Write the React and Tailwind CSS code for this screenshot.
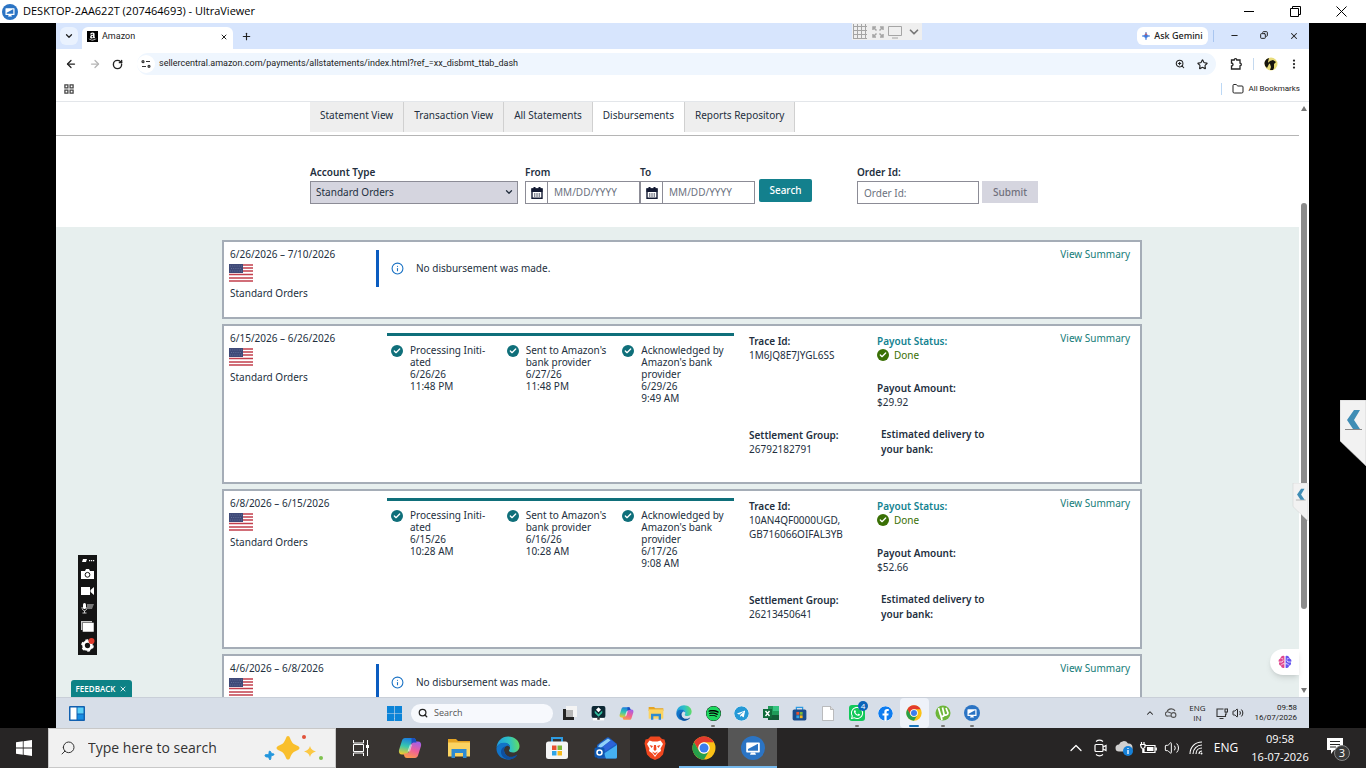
import { useState } from 'react'
import {
  ArrowLeft,
  ArrowRight,
  Check,
  ChevronDown,
  ChevronUp,
  Copy,
  EllipsisVertical,
  Folder,
  Info,
  Minus,
  Plus,
  RotateCw,
  Search,
  Star,
  Volume2,
  X,
  ZoomIn,
} from 'lucide-react'
import { FaAmazon, FaFacebook, FaSpotify, FaTelegram, FaWhatsapp } from 'react-icons/fa'

const tabs = ['Statement View', 'Transaction View', 'All Statements', 'Disbursements', 'Reports Repository']

const disbursements = [
  { period: '6/26/2026 – 7/10/2026', accountType: 'Standard Orders', steps: null },
  {
    period: '6/15/2026 – 6/26/2026',
    accountType: 'Standard Orders',
    steps: [
      { title: ['Processing Initi-', 'ated'], date: '6/26/26', time: '11:48 PM' },
      { title: ["Sent to Amazon's", 'bank provider'], date: '6/27/26', time: '11:48 PM' },
      { title: ['Acknowledged by', "Amazon's bank", 'provider'], date: '6/29/26', time: '9:49 AM' },
    ],
    traceIds: '1M6JQ8E7JYGL6SS',
    settlementGroup: '26792182791',
    amount: '$29.92',
  },
  {
    period: '6/8/2026 – 6/15/2026',
    accountType: 'Standard Orders',
    steps: [
      { title: ['Processing Initi-', 'ated'], date: '6/15/26', time: '10:28 AM' },
      { title: ["Sent to Amazon's", 'bank provider'], date: '6/16/26', time: '10:28 AM' },
      { title: ['Acknowledged by', "Amazon's bank", 'provider'], date: '6/17/26', time: '9:08 AM' },
    ],
    traceIds: '10AN4QF0000UGD, GB716066OIFAL3YB',
    settlementGroup: '26213450641',
    amount: '$52.66',
  },
  { period: '4/6/2026 – 6/8/2026', steps: null },
]

/* ---------- logos ---------- */

function ViewerLogo({ className }) {
  return (
    <svg viewBox="0 0 24 24" className={className} aria-hidden="true">
      <circle cx="12" cy="12" r="12" fill="#2b74c4" />
      <path d="M6 6.500h12a.8.8 0 0 1 .8.8v8.400a.8.8 0 0 1-.8.8H6a.8.8 0 0 1-.8-.8V7.300a.8.8 0 0 1 .8-.8z" fill="#fff" />
      <path d="M7 14.800V13l9.500-5H17v6.800z" fill="#2b74c4" />
      <path d="M10 16.500h4l1 2.200H9z" fill="#fff" />
    </svg>
  )
}

function ChromeLogo({ className }) {
  return (
    <svg viewBox="0 0 48 48" className={className} aria-hidden="true">
      <circle cx="24" cy="24" r="23" fill="#fbc116" />
      <path d="M4.080 12.500A23 23 0 0 1 43.920 12.500H24a11.500 11.500 0 0 0-9.960 17.250z" fill="#e33b2e" />
      <path d="M4.080 12.500A23 23 0 0 0 24 47l9.960-17.250a11.500 11.500 0 0 1-19.920 0z" fill="#269f4b" />
      <circle cx="24" cy="24" r="11.500" fill="#fff" />
      <circle cx="24" cy="24" r="9" fill="#3b7ded" />
    </svg>
  )
}

function EdgeLogo({ className, id }) {
  return (
    <svg viewBox="0 0 48 48" className={className} aria-hidden="true">
      <defs>
        <linearGradient id={id} x1="0" y1="0.300" x2="1" y2="0.200">
          <stop offset="0" stopColor="#1f9ee0" />
          <stop offset="0.550" stopColor="#2fc2c4" />
          <stop offset="1" stopColor="#66e05a" />
        </linearGradient>
      </defs>
      <path d="M1 24C2 10 12 1 24 1c14 0 23 9 23 19 0 8-6 13-13 13-5 0-8-2-8-4 0-1 2-2 2-6 0-5-5-9-11-9C9 14 3 18 1 24z" fill={`url(#${id})`} />
      <path d="M1 24C3 17 9 13.500 16 13.500c7 0 12 4 12 9.500-2-3-5-4-7-3-5 2-6 8-4 13 3 8 11 12 20 9-4 4-9 5-13 5C11 47 0 37 1 24z" fill="#1173c8" />
      <path d="M21 20c-5 2-6 8-4 13 3 8 13 12 24 5 1-1 2 0 1 1-4 6-11 8-17 8-9-1-15-8-15-15 0-7 5-11 11-12z" fill="#0f4f9e" />
    </svg>
  )
}

function CopilotLogo({ className, id }) {
  return (
    <svg viewBox="0 0 48 48" className={className} aria-hidden="true">
      <defs>
        <linearGradient id={`${id}a`} x1="0.500" y1="0" x2="0.300" y2="1">
          <stop offset="0" stopColor="#1b7de0" />
          <stop offset="0.500" stopColor="#37c7ae" />
          <stop offset="1" stopColor="#f3cb2d" />
        </linearGradient>
        <linearGradient id={`${id}b`} x1="0.700" y1="0" x2="0.300" y2="1">
          <stop offset="0" stopColor="#a260e8" />
          <stop offset="0.500" stopColor="#ee5f9a" />
          <stop offset="1" stopColor="#fb9a4b" />
        </linearGradient>
      </defs>
      <path d="M14 4h17c3 0 4 2 5 5l1 4h-5c-4 0-6 2-7 6l-4 14c-1 3-3 4-6 4H8c-5 0-7-4-6-9L8 9c1-3 3-5 6-5z" fill={`url(#${id}a)`} />
      <path d="M34 44H18c-4 0-5-2-6-6l-1-3h5c4 0 6-2 7-6l4-14c1-3 3-4 6-4h7c5 0 7 4 6 9l-6 19c-1 3-3 5-6 5z" fill={`url(#${id}b)`} />
      <path d="M24 17h4l-4 14h-5z" fill="#fff" opacity="0.600" />
      <path d="M27 4h4c3 0 4 2 5 5l1 4h-5c-2 0-4 1-5 3z" fill="#1c4fc0" />
    </svg>
  )
}

function FolderLogo({ className }) {
  return (
    <svg viewBox="0 0 48 48" className={className} aria-hidden="true">
      <path d="M2 6h16l4 4h24v8H2z" fill="#e5a423" />
      <path d="M2 13h44v28H2z" fill="#fcd462" />
      <path d="M9 26h30v18h-7V34H16v10H9z" fill="#2e8bd2" />
    </svg>
  )
}

function StoreLogo({ className, dark }) {
  return (
    <svg viewBox="0 0 48 48" className={className} aria-hidden="true">
      <path d="M14 13V4h20v9" fill="none" stroke="#2d9be2" strokeWidth="4" />
      <rect x="2" y="11" width="44" height="35" rx="5" fill={dark ? '#1a4c8c' : '#f5f5f5'} />
      <path d="M14 19h9v9h-9z" fill="#e85130" />
      <path d="M25 19h9v9h-9z" fill="#7db93a" />
      <path d="M14 30h9v9h-9z" fill="#2fa4e7" />
      <path d="M25 30h9v9h-9z" fill="#f8b91c" />
    </svg>
  )
}

function OutlookLogo({ className }) {
  return (
    <svg viewBox="0 0 48 48" className={className} aria-hidden="true">
      <path d="M6 18 26 3q2-1 4 0l16 13v26a3 3 0 0 1-3 3H9a3 3 0 0 1-3-3z" fill="#1b5fc4" />
      <path d="M12 16 28 5l6 4-20 15-6-3z" fill="#8fd0f8" />
      <path d="m34 8 10 8-22 15-8-7z" fill="#2d63d8" />
      <path d="m46 18-26 17 4 10h19a3 3 0 0 0 3-3z" fill="#45b0f2" />
      <rect x="1" y="23" width="20" height="20" rx="3" fill="#0d57b0" />
      <circle cx="11" cy="33" r="5" fill="none" stroke="#fff" strokeWidth="3" />
    </svg>
  )
}

function BraveLogo({ className }) {
  return (
    <svg viewBox="0 0 48 48" className={className} aria-hidden="true">
      <path d="M15 1h18l5 5 5 1 2 8-5 22-7 7-9 4-9-4-7-7L3 15l2-8 5-1z" fill="#f0471f" />
      <path d="m13 9 6 2h10l6-2 5 7-5 9 1 5-7 5-5 7-5-7-7-5 1-5-5-9z" fill="#fff" />
      <path d="m13 18 7 2-3 4zM35 18l-7 2 3 4zM22 18h4l1 9-3 3-3-3zM18 31l6 3 6-3-6 8z" fill="#f0471f" />
    </svg>
  )
}

function WindowsLogo({ className }) {
  return (
    <svg viewBox="0 0 16 16" className={className} aria-hidden="true">
      <path d="M0 2.300 6.800 1.300v6.300H0zM7.600 1.200 16 0v7.600H7.600zM0 8.400h6.800v6.300L0 13.700zM7.600 8.400H16V16l-8.400-1.200z" fill="#fff" />
    </svg>
  )
}

function ClapLogo({ className }) {
  return (
    <svg viewBox="0 0 24 24" className={className} aria-hidden="true">
      <rect x="1" y="0" width="22" height="19" rx="3" fill="#0c2733" />
      <path d="m12 2 4 4-4 4-4-4z" fill="#fff" />
      <path d="m6 7 6 6 6-6v4l-6 6-6-6z" fill="#2fbf9f" />
      <path d="M3 19h18v4H3z" fill="#fff" />
      <path d="M10 19h4v3h-4z" fill="#333" />
    </svg>
  )
}

function SparkleArt({ className }) {
  return (
    <svg viewBox="0 0 64 28" className={className} aria-hidden="true">
      <path d="M24 2q1.500 0 2 2c2 5 3 6 8 8 2 1 2 3 0 4-5 2-6 3-8 8-1 2-3 2-4 0-2-5-3-6-8-8-2-1-2-3 0-4 5-2 6-3 8-8q.500-2 2-2z" fill="#f9bf2c" />
      <path d="M46 12c1 3 2 4 6 5.500-4 1.500-5 2.500-6 5.500-1-3-2-4-6-5.500 4-1.500 5-2.500 6-5.500z" fill="#fbc844" />
      <path d="M6 17c1 2 2 3 4 3 0 2-2 1-3 2 0 2 0 3-1 4-1-1-1-3-2-3-2 0-3 0-3-2 2-1 3 0 4-1 0-2 0-3 1-3z" fill="#2296dd" stroke="#2296dd" />
      <circle cx="40" cy="3" r="2" fill="#e1523a" />
      <circle cx="57" cy="24" r="2" fill="#7fc24f" />
    </svg>
  )
}

function BrainLogo({ className }) {
  return (
    <svg viewBox="0 0 24 24" className={className} aria-hidden="true">
      <path d="M11 2v20c-3 1-5 0-6-3-3-1-4-4-3-6-2-3-1-6 2-7 1-4 4-6 7-4z" fill="#e0468e" />
      <path d="M13 2v20c3 1 5 0 6-3 3-1 4-4 3-6 2-3 1-6-2-7-1-4-4-6-7-4z" fill="#6554f0" />
      <path d="M2 12h5l2-3M5 18l3-3h3M6 6l3 1M22 12h-5l-2-3M19 18l-3-3h-3M18 6l-3 1" fill="none" stroke="#fff" strokeWidth="1.300" />
    </svg>
  )
}

function UsFlag() {
  return (
    <svg viewBox="0 0 24 18" className="h-[18px] w-6" role="img" aria-label="United States">
      <path d="M0 0h24v18H0z" fill="#fff" />
      <path d="M0 1h24M0 4h24M0 7h24M0 10.500h24M0 14h24M0 17h24" stroke="#c23f4c" strokeWidth="1.700" />
      <path d="M0 0h14v9H0z" fill="#3f4a78" />
      <path d="M1 2h12M2 4.500h11M1 7h12" stroke="#6c779f" strokeWidth="0.800" strokeDasharray="1 1.200" />
    </svg>
  )
}

function CalendarIcon() {
  return (
    <svg viewBox="0 0 12 12" className="size-3" aria-hidden="true">
      <path d="M1 2h10v9.300H1z" fill="none" stroke="#131a33" strokeWidth="1.400" />
      <path d="M.500 1.500h11V5H.500zM2.500 0h2v2h-2zM7.500 0h2v2h-2z" fill="#131a33" />
      <path d="M3 7h6M3 9h6" stroke="#131a33" strokeWidth="1.200" strokeDasharray="1.400 0.900" />
    </svg>
  )
}

function CheckBadge({ color }) {
  return (
    <span className={`flex size-3 shrink-0 items-center justify-center rounded-full ${color}`}>
      <Check className="size-2 text-white" strokeWidth={4} />
    </span>
  )
}

/* ---------- outer window ---------- */

function TitleBar() {
  return (
    <header className="flex h-[23px] shrink-0 items-center bg-white text-black">
      <ViewerLogo className="ml-[2px] size-4" />
      <h1 className="ml-[5px] font-['Open_Sans','Noto_Sans',sans-serif] text-[11px]">DESKTOP-2AA622T (207464693) - UltraViewer</h1>
      <div className="ml-auto flex pr-[2px]">
        <button type="button" aria-label="Minimize" className="flex w-[46px] items-center justify-center">
          <span className="h-px w-[10px] bg-black" />
        </button>
        <button type="button" aria-label="Restore" className="flex w-[46px] items-center justify-center">
          <svg viewBox="0 0 11 11" className="size-[11px]" fill="none" stroke="currentColor">
            <path d="M.500 2.500h8v8h-8zM2.500 2.500v-2h8v8h-2" />
          </svg>
        </button>
        <button type="button" aria-label="Close" className="flex w-[46px] items-center justify-center">
          <svg viewBox="0 0 11 11" className="size-[11px]" fill="none" stroke="currentColor">
            <path d="m.500.500 10 10m0-10-10 10" />
          </svg>
        </button>
      </div>
    </header>
  )
}

function SideHandle({ className, shape }) {
  return (
    <button type="button" aria-label="Open panel" className={className}>
      <svg viewBox="0 0 26 66" className={shape}>
        <path d="M0 0h26v66L0 41z" fill="#f2f2f2" stroke="#bbb" strokeWidth="0.500" />
        <path d="M5 29.500h17" stroke="#888" />
        <path d="M20 10h-6L7 20l6 9h7l-6-9z" fill="#3f8db5" />
      </svg>
    </button>
  )
}

function HostTaskbar() {
  const item = 'flex w-[49px] items-center justify-center'

  return (
    <footer className="flex h-10 shrink-0 bg-[#272525] font-['Open_Sans','Noto_Sans',sans-serif] text-white">
      <button type="button" aria-label="Start" className="flex w-12 items-center justify-center">
        <WindowsLogo className="size-4" />
      </button>
      <label className="flex w-72 items-center border border-[#c8c8c8] bg-[#f1f1f1] pl-[11px] text-[#333]">
        <Search className="size-4 -scale-x-100" strokeWidth={1.5} />
        <input
          type="text"
          aria-label="Type here to search"
          placeholder="Type here to search"
          className="ml-3 w-[176px] bg-transparent text-sm outline-none placeholder:text-[#333]"
        />
        <SparkleArt className="h-7 w-16" />
      </label>
      <div className="flex bg-[#383432]">
        <button type="button" aria-label="Task View" className={item}>
          <svg viewBox="0 0 18 18" className="size-[18px]" fill="none" stroke="currentColor">
            <path d="M1.500 1v3h10V1M1.500 17v-3h10v3M1.500 5.500h10v7h-10zM15.500 1v16" />
            <path d="M14 6h3v3h-3z" fill="currentColor" stroke="none" />
          </svg>
        </button>
        <button type="button" aria-label="Copilot" className={item}><CopilotLogo id="hostCopilot" className="size-6" /></button>
        <button type="button" aria-label="File Explorer" className={item}><FolderLogo className="size-6" /></button>
        <button type="button" aria-label="Edge" className={item}><EdgeLogo id="hostEdge" className="size-6" /></button>
        <button type="button" aria-label="Store" className={item}><StoreLogo className="size-6" /></button>
        <button type="button" aria-label="Outlook" className={item}><OutlookLogo className="size-6" /></button>
      </div>
      <button type="button" aria-label="Brave" className={item}><BraveLogo className="size-6" /></button>
      <button type="button" aria-label="Chrome" className={`${item} border-b-2 border-[#76b9ed] pt-[2px]`}><ChromeLogo className="size-6" /></button>
      <button type="button" aria-label="UltraViewer" className={`${item} border-b-2 border-[#76b9ed] bg-[#565656] pt-[2px]`}><ViewerLogo className="size-6" /></button>

      <div className="ml-auto flex items-center">
        <div className="flex items-center">
          <span className="flex w-6 justify-center"><ChevronUp className="size-5" strokeWidth={1.5} /></span>
          <span className="flex w-6 justify-center">
            <svg viewBox="0 0 16 18" className="h-[18px] w-4" fill="none" stroke="currentColor" strokeWidth="1.200">
              <rect x="3" y="5.500" width="8" height="7" rx="1" />
              <path d="m11 8 3-1.500v5L11 10M4 2.500c2-1.500 5-1.500 7 0M4 15.500c2 1.500 5 1.500 7 0" />
            </svg>
          </span>
          <span className="flex w-6 justify-center">
            <svg viewBox="0 0 18 16" className="h-4 w-[18px]">
              <path d="M4 11.500a3.500 3.500 0 0 1 0-7 5 5 0 0 1 9-1 4 4 0 0 1 1 8z" fill="#d0d0d0" />
              <circle cx="13" cy="11" r="5" fill="#1681d8" />
              <path d="M13 10v4M13 8v1" stroke="#fff" strokeWidth="1.300" />
            </svg>
          </span>
          <span className="flex w-6 justify-center">
            <svg viewBox="0 0 17 12" className="h-3 w-[17px]" fill="none" stroke="currentColor" strokeWidth="1.200">
              <path d="M5.500 3.500H15v7H4V7M16.300 5.500v3M1.500 0v2.500M4 0v2.500M.500 2.500H5V4.500a2 2 0 0 1-4 0zM2.800 7v4" />
              <path d="M7 5h6.500v4H7z" fill="currentColor" stroke="none" />
            </svg>
          </span>
          <span className="flex w-6 justify-center"><Volume2 className="size-4" strokeWidth={1.5} /></span>
          <span className="flex w-6 justify-center">
            <svg viewBox="0 0 14 14" className="size-[14px]" fill="none" stroke="currentColor" strokeWidth="1.100">
              <path d="M1 13C1 6 6 1 13 1M4 13c0-5 4-9 9-9M7 13c0-4 3-6 6-6M10 13c0-2 1-3 3-3" />
              <circle cx="12.500" cy="12.500" r="1" fill="currentColor" stroke="none" />
            </svg>
          </span>
        </div>
        <span className="ml-1 w-7 text-center text-xs">ENG</span>
        <div className="ml-2 w-[64px] text-center text-[11px] leading-[18px] whitespace-nowrap">
          <p>09:58</p>
          <p>16-07-2026</p>
        </div>
        <button type="button" aria-label="3 notifications" className="mr-4 ml-[14px] flex w-6 justify-center">
          <svg viewBox="0 0 24 26" className="h-[26px] w-6">
            <path d="M1 3h16v12H8l-3 4v-4H1z" fill="#fff" />
            <path d="M4 6.500h10M4 9.500h10M4 12h6" stroke="#272525" />
            <circle cx="16" cy="18" r="7.500" fill="#3a3a3a" stroke="#888" />
            <text x="16" y="22" textAnchor="middle" fontSize="11" fill="#fff">3</text>
          </svg>
        </button>
      </div>
    </footer>
  )
}

/* ---------- browser on the remote desktop ---------- */

function BrowserChrome() {
  return (
    <div className="shrink-0 font-['Open_Sans','Noto_Sans',sans-serif] text-[#222]">
      <div className="flex h-[26px] items-center bg-[#d7e5fd]">
        <button type="button" aria-label="Search tabs" className="ml-1 flex size-[18px] items-center justify-center rounded-md bg-[#eaf2fe]">
          <ChevronDown className="size-[10px]" strokeWidth={3} />
        </button>
        <div className="ml-1 flex h-[22px] w-[151px] items-center self-end rounded-t-md bg-white px-[5px] pb-[3px] text-[9px]">
          <span className="flex size-[11px] items-center justify-center bg-black text-white"><FaAmazon className="size-[9px]" /></span>
          <span className="ml-1 font-['Roboto',sans-serif]">Amazon</span>
          <button type="button" aria-label="Close tab" className="ml-auto"><X className="size-2" strokeWidth={3} /></button>
        </div>
        <button type="button" aria-label="New tab" className="ml-2"><Plus className="size-[11px]" strokeWidth={2.5} /></button>
        <div className="ml-auto flex items-center">
          <button type="button" className="flex h-[18px] w-[71px] items-center justify-center gap-1 rounded-md bg-white font-['Noto_Sans',sans-serif] text-[9px] font-medium">
            <svg viewBox="0 0 10 10" className="size-2">
              <path d="M5 0c.500 3.500 1.500 4.500 5 5-3.500.500-4.500 1.500-5 5C4.500 6.500 3.500 5.500 0 5c3.500-.500 4.500-1.500 5-5z" fill="#3c78dc" stroke="#3c78dc" strokeWidth="0.600" />
              <path d="M5 0c.300 2 .700 3 1.500 3.800L3.500 4C4.300 3.300 4.700 2 5 0z" fill="#e2504a" />
            </svg>
            Ask Gemini
          </button>
          <span className="ml-[5px] h-3 w-px bg-[#a9c6f0]" />
          <div className="flex pl-[5px]">
            <button type="button" aria-label="Minimize" className="flex w-[30px] justify-center"><Minus className="size-[9px]" strokeWidth={3} /></button>
            <button type="button" aria-label="Restore" className="flex w-[30px] justify-center"><Copy className="size-2 -scale-x-100" strokeWidth={3} /></button>
            <button type="button" aria-label="Close" className="flex w-[30px] justify-center"><X className="size-[10px]" strokeWidth={2.5} /></button>
          </div>
        </div>
      </div>

      <div className="flex h-[30px] items-center bg-white">
        <button type="button" aria-label="Back" className="ml-[9px]"><ArrowLeft className="size-3" strokeWidth={2.5} /></button>
        <button type="button" aria-label="Forward" className="ml-3 text-[#b5b5b5]"><ArrowRight className="size-3" strokeWidth={2.5} /></button>
        <button type="button" aria-label="Reload" className="ml-[11px]"><RotateCw className="size-[11px]" strokeWidth={3} /></button>
        <div className="ml-[14px] flex h-[22px] flex-1 items-center rounded-full bg-[#eff6fe] pr-2">
          <span className="flex size-[18px] items-center justify-center rounded-full bg-white">
            <svg viewBox="0 0 10 8" className="h-2 w-[10px]" fill="none" stroke="#333" strokeWidth="1.200">
              <path d="M5 1.500h4M1 6.500h4" />
              <circle cx="2" cy="1.700" r="1" />
              <circle cx="8" cy="6.300" r="1" />
            </svg>
          </span>
          <input
            type="text"
            aria-label="Address"
            defaultValue="sellercentral.amazon.com/payments/allstatements/index.html?ref_=xx_disbmt_ttab_dash"
            className="ml-1 min-w-0 flex-1 bg-transparent font-['Roboto',sans-serif] text-[9px] outline-none"
          />
          <ZoomIn className="size-[10px]" strokeWidth={2.5} />
          <Star className="ml-3 size-[11px]" strokeWidth={2.5} />
        </div>
        <button type="button" aria-label="Extensions" className="ml-[14px]">
          <svg viewBox="0 0 12 12" className="size-3" fill="none" stroke="currentColor" strokeWidth="1.300">
            <path d="M1.500 2h2.700a1.300 1.300 0 0 1 2.600 0H10v3.200a1.300 1.300 0 0 1 0 2.600V11H1.500V8a1.500 1.500 0 0 0 0-3z" />
          </svg>
        </button>
        <span className="ml-[11px] h-3 w-px bg-[#c4d9ef]" />
        <svg viewBox="0 0 14 14" className="ml-[10px] size-[14px]" role="img" aria-label="Profile">
          <circle cx="7" cy="7" r="6.500" fill="#e8dc7a" />
          <path d="M1 4a6 6 0 0 1 4-3L4 5l1 2-2 4a6 6 0 0 1-2-7zM6 4l3-1 3 2-2 2v4l-1 2H6l1-3-1-3-2-1z" fill="#16140d" />
        </svg>
        <button type="button" aria-label="Menu" className="mr-[9px] ml-[10px]"><EllipsisVertical className="size-3" strokeWidth={2.5} /></button>
      </div>

      <div className="flex h-[23px] items-center border-b border-[#e3e6ea] bg-white pb-[3px]">
        <svg viewBox="0 0 11 11" className="ml-2 size-[10px]" fill="none" stroke="#444" strokeWidth="1.400">
          <path d="M1 1h3.300v3.300H1zM6.700 1H10v3.300H6.700zM1 6.700h3.300V10H1zM6.700 6.700H10V10H6.700z" />
        </svg>
        <span className="ml-auto h-3 w-px bg-[#bcd8f5]" />
        <button type="button" className="mr-[9px] ml-[10px] flex items-center gap-1 font-['Roboto',sans-serif] text-[8px]">
          <Folder className="size-3" strokeWidth={2} />
          All Bookmarks
        </button>
      </div>
    </div>
  )
}

function DateField({ label }) {
  return (
    <div className="w-[115px]">
      <label htmlFor={label} className="block font-semibold leading-[18px]">{label}</label>
      <div className="flex h-[23px] border border-[#8c8c96] bg-white">
        <button type="button" aria-label={`${label} calendar`} className="flex w-[22px] items-center justify-center border-r border-[#8c8c96]">
          <CalendarIcon />
        </button>
        <input id={label} type="text" placeholder="MM/DD/YYYY" className="w-[90px] px-[6px] outline-none placeholder:text-[#6b7280]" />
      </div>
    </div>
  )
}

function Filters() {
  return (
    <form className="flex items-start pt-[27px] pb-[23px]" onSubmit={(event) => event.preventDefault()}>
      <div className="w-52">
        <label htmlFor="accountType" className="block font-semibold leading-[18px]">Account Type</label>
        <div className="relative">
          <select id="accountType" className="block h-[23px] w-full appearance-none border border-[#8c8c96] bg-[#d5d5df] px-[5px]">
            <option>Standard Orders</option>
          </select>
          <ChevronDown className="pointer-events-none absolute top-[6px] right-1 size-[10px]" strokeWidth={3} />
        </div>
      </div>
      <div className="ml-[7px] flex">
        <DateField label="From" />
        <DateField label="To" />
      </div>
      <button type="submit" className="mt-4 ml-1 h-[23px] w-[53px] rounded-[2px] bg-[#13808d] font-medium text-white">Search</button>
      <div className="ml-[45px] w-[122px]">
        <label htmlFor="orderId" className="block font-semibold leading-[18px]">Order Id:</label>
        <input id="orderId" type="text" placeholder="Order Id:" className="block h-[23px] w-full border border-[#8c8c96] px-[6px] outline-none placeholder:text-[#6b7280]" />
      </div>
      <button type="button" disabled className="mt-[18px] ml-[3px] h-[22px] w-14 bg-[#d5d5df] font-medium text-[#70707c]">Submit</button>
    </form>
  )
}

function Timeline({ steps }) {
  return (
    <ol className="mt-[7px] ml-[11px] flex w-[347px] self-start border-t-3 border-[#0f6f7a] pt-2 leading-[12px]">
      {steps.map((step) => (
        <li key={step.date} className="flex flex-1 pl-1">
          <CheckBadge color="mt-px bg-[#0f6f7a]" />
          <div className="ml-[7px]">
            {step.title.map((line) => (
              <p key={line}>{line}</p>
            ))}
            <p>{step.date}</p>
            <p>{step.time}</p>
          </div>
        </li>
      ))}
    </ol>
  )
}

function DisbursementCard({ item }) {
  return (
    <article className={`flex border-2 border-[#a5adb7] bg-white pl-[6px] ${item.steps ? 'min-h-[160px]' : 'min-h-[79px]'}`}>
      <div className="w-[146px] pt-1">
        <p className="leading-4">{item.period}</p>
        <div className="-ml-px pt-[2px] pb-[3px]"><UsFlag /></div>
        <p className="leading-4">{item.accountType}</p>
      </div>

      {item.steps ? (
        <>
          <Timeline steps={item.steps} />
          <dl className="ml-[15px] grid w-[128px] grid-rows-[94px_auto] content-start pt-2 leading-[14px]">
            <div>
              <dt className="font-semibold">Trace Id:</dt>
              <dd className="w-[100px]">{item.traceIds}</dd>
            </div>
            <div>
              <dt className="font-semibold">Settlement Group:</dt>
              <dd>{item.settlementGroup}</dd>
            </div>
          </dl>
          <dl className="w-[130px] pt-2 leading-[14px]">
            <dt className="font-semibold text-[#138290]">Payout Status:</dt>
            <dd className="flex items-center gap-[5px] text-[#3a7005]">
              <CheckBadge color="bg-[#3a7005]" />
              Done
            </dd>
            <dt className="pt-[19px] font-semibold">Payout Amount:</dt>
            <dd>{item.amount}</dd>
            <dt className="pt-[18px] pl-1 font-semibold leading-[15px]">Estimated delivery to<br />your bank:</dt>
          </dl>
        </>
      ) : (
        <div className="mt-2 flex h-[37px] items-center self-start border-l-3 border-[#0a5cc0] pl-3">
          <Info className="size-[13px] text-[#1a72c4]" strokeWidth={2} />
          <p className="ml-3">No disbursement was made.</p>
        </div>
      )}

      <a href="#summary" className="mt-1 mr-[10px] ml-auto self-start leading-4 text-[#147c78]">View Summary</a>
    </article>
  )
}

function RecorderWidget() {
  return (
    <div className="absolute bottom-[42px] left-[22px] flex h-[100px] w-[19px] flex-col items-center justify-between bg-[#141414] py-[3px] text-white">
      <svg viewBox="0 0 14 5" className="h-[5px] w-[14px]" fill="currentColor">
        <path d="M2 1h4L5 4H1zM8 2h1.200v1.200H8zM10 2h1.200v1.200H10zM12 2h1.200v1.200H12z" />
      </svg>
      <svg viewBox="0 0 13 10" className="h-[10px] w-[13px]">
        <path d="M0 2h4l1-2h3l1 2h4v8H0z" fill="#fff" />
        <circle cx="6.500" cy="5.800" r="2.400" fill="#fff" stroke="#141414" />
      </svg>
      <svg viewBox="0 0 13 10" className="h-[10px] w-[13px]" fill="currentColor"><path d="M0 1h9v8H0zM9.500 4 13 1v8L9.500 6z" /></svg>
      <svg viewBox="0 0 13 12" className="h-3 w-[13px]">
        <rect x="2" y="1" width="3" height="6" rx="1.500" fill="#fff" />
        <path d="M1 5c0 5 5 5 5 0M3.500 9v2M1.500 11h4" fill="none" stroke="#ccc" />
        <path d="M6 2h7l-2 5H6z" fill="#777" />
      </svg>
      <svg viewBox="0 0 13 11" className="h-[11px] w-[13px]"><path d="M0 0h11v9H0z" fill="#ccc" /><path d="M1.500 1.500H13V11H1.500z" fill="#fff" stroke="#141414" strokeWidth="0.500" /></svg>
      <svg viewBox="0 0 14 14" className="size-[14px]">
        <circle cx="6.500" cy="7.500" r="4" fill="none" stroke="#fff" strokeWidth="2.600" />
        <circle cx="6.500" cy="7.500" r="5.500" fill="none" stroke="#fff" strokeWidth="1.600" strokeDasharray="2.900 2.860" />
        <circle cx="10.500" cy="3" r="3" fill="#e03b2c" />
      </svg>
    </div>
  )
}

function RemoteTaskbar() {
  const item = 'flex flex-1 items-center justify-center'

  return (
    <div className="grid h-[31px] shrink-0 grid-cols-[1fr_auto_1fr] items-center border-t border-[#c9cfd8] bg-[#d7dee8] font-['Open_Sans','Noto_Sans',sans-serif] text-[#222]">
      <button type="button" aria-label="Widgets" className="ml-[13px] justify-self-start">
        <svg viewBox="0 0 16 15" className="h-[15px] w-4">
          <rect width="16" height="15" rx="1" fill="#1160b0" />
          <path d="M1.500 1.500h6v12h-6z" fill="#fff" />
          <path d="M8.500 1.500h6v6h-6z" fill="#5cd0f7" />
          <path d="M8.500 8.500h6v5h-6z" fill="#168de2" />
        </svg>
      </button>
      <div className="flex items-center pl-1">
        <button type="button" aria-label="Start" className="ml-1">
          <svg viewBox="0 0 15 15" className="size-[15px]" fill="#0c84d8"><path d="M0 0h7.200v7.200H0zM7.800 0H15v7.200H7.800zM0 7.800h7.200V15H0zM7.800 7.800H15V15H7.800z" /></svg>
        </button>
        <label className="ml-[9px] flex h-[19px] w-[142px] items-center rounded-full bg-[#f7f9fd] px-[7px]">
          <Search className="size-[10px]" strokeWidth={3} />
          <input type="text" aria-label="Search" placeholder="Search" className="ml-[6px] w-[100px] bg-transparent text-[9px] outline-none placeholder:text-[#555]" />
        </label>
        <div className="ml-[2px] flex h-[30px] w-[431px]">
          <button type="button" aria-label="Desktops" className={item}>
            <svg viewBox="0 0 15 15" className="size-[15px]"><path d="M4 0h11v11H4z" fill="#f4f4f4" /><path d="M4 4h7v7H4z" fill="#b5b5b5" /><path d="M1 3h3v8h8v3H1z" fill="#222" /></svg>
          </button>
          <button type="button" aria-label="Filmora" className={item}><ClapLogo className="size-[15px]" /></button>
          <button type="button" aria-label="Copilot" className={item}><CopilotLogo id="remoteCopilot" className="size-[15px]" /></button>
          <button type="button" aria-label="File Explorer" className={item}><FolderLogo className="size-4" /></button>
          <button type="button" aria-label="Edge" className={item}><EdgeLogo id="remoteEdge" className="size-4" /></button>
          <button type="button" aria-label="Spotify" className={`${item} relative`}>
            <FaSpotify className="size-[15px] rounded-full bg-black text-[#1ed760]" />
            <span className="absolute bottom-px h-[2px] w-1 rounded-full bg-[#777]" />
          </button>
          <button type="button" aria-label="Telegram" className={item}><FaTelegram className="size-[15px] rounded-full bg-white text-[#2599d6]" /></button>
          <button type="button" aria-label="Excel" className={item}>
            <svg viewBox="0 0 16 14" className="h-[14px] w-4">
              <path d="M5 0h11v14H5z" fill="#1f9a58" />
              <path d="M10 0h6v5h-6z" fill="#35c481" />
              <path d="M5 9h11v5H5z" fill="#125b36" />
              <path d="M0 3h9v9H0z" fill="#0f6b3a" />
              <path d="m2.500 5 4 5m0-5-4 5" stroke="#fff" strokeWidth="1.400" />
            </svg>
          </button>
          <button type="button" aria-label="Store" className={item}><StoreLogo dark className="size-[15px]" /></button>
          <button type="button" aria-label="Document" className={item}>
            <svg viewBox="0 0 12 15" className="h-[15px] w-3"><path d="M.500.500h8l3 3v11H.500z" fill="#fff" stroke="#a5a5a5" strokeWidth="0.700" /><path d="M8.500.500v3h3" fill="#ddd" stroke="#a5a5a5" strokeWidth="0.700" /></svg>
          </button>
          <button type="button" aria-label="WhatsApp" className={`${item} relative`}>
            <FaWhatsapp className="size-4 rounded-[3px] bg-[#12c95a] p-px text-white" />
            <span className="absolute top-[3px] right-[3px] flex size-[10px] items-center justify-center rounded-full bg-[#0c63b8] text-[8px] leading-none text-white">4</span>
            <span className="absolute bottom-px h-[2px] w-1 rounded-full bg-[#777]" />
          </button>
          <button type="button" aria-label="Facebook" className={item}><FaFacebook className="size-[15px] rounded-full bg-white text-[#0f7df0]" /></button>
          <button type="button" aria-label="Chrome" className={`${item} relative rounded-sm bg-[#eef2f9]`}>
            <ChromeLogo className="size-4" />
            <span className="absolute bottom-px h-[2px] w-[10px] rounded-full bg-[#1672b8]" />
          </button>
          <button type="button" aria-label="uTorrent" className={`${item} relative`}>
            <svg viewBox="0 0 16 16" className="size-4">
              <circle cx="8" cy="8" r="7.500" fill="#6db63a" />
              <path d="m3.500 3 2 7c1 2.500 4 1.500 3.500-1L7.500 2.500M9 9c1 2 4 1 4-1l-2-5M5.500 9 7 15" fill="none" stroke="#fff" strokeWidth="1.700" />
            </svg>
            <span className="absolute bottom-px h-[2px] w-1 rounded-full bg-[#777]" />
          </button>
          <button type="button" aria-label="UltraViewer" className={`${item} relative`}>
            <ViewerLogo className="size-4" />
            <span className="absolute bottom-px h-[2px] w-1 rounded-full bg-[#777]" />
          </button>
        </div>
      </div>
      <div className="flex items-center justify-self-end pr-3 text-[8px]">
        <ChevronUp className="size-[10px]" strokeWidth={2.5} />
        <svg viewBox="0 0 12 10" className="ml-[10px] h-[10px] w-3" fill="none" stroke="#555" strokeWidth="1.100">
          <path d="M6 8H3a2 2 0 0 1-1-4c1-4 7-4 8-1M3 4l3 1" />
          <circle cx="8.500" cy="7" r="2.400" />
        </svg>
        <p className="ml-[10px] w-5 text-center leading-[10px]">ENG<br />IN</p>
        <svg viewBox="0 0 12 11" className="ml-[9px] h-[11px] w-3" fill="none" stroke="#333" strokeWidth="1.100">
          <path d="M7.500 1H1v7.500h8.500V6M3.500 10.500h4M9 1h2.500v3H9zM10 4v3" />
        </svg>
        <Volume2 className="ml-1 size-3" strokeWidth={2} />
        <p className="ml-[10px] text-right font-['Roboto',sans-serif] leading-[10px]">09:58<br />16/07/2026</p>
      </div>
    </div>
  )
}

function PaymentsPage() {
  const [activeTab, setActiveTab] = useState('Disbursements')

  return (
    <div className="relative flex min-h-0 flex-1">
      <main className="min-w-0 flex-1 overflow-hidden bg-[#e7efee] font-['Noto_Sans','Open_Sans',sans-serif] text-[10px] text-[#232f3e]">
        <div className="bg-white">
          <div className="border-b border-[#b5b5b5] pl-[9px]">
            <nav className="mx-auto flex max-w-[920px] pb-[3px] pl-[88px]">
              {tabs.map((tab) => (
                <button
                  key={tab}
                  type="button"
                  onClick={() => setActiveTab(tab)}
                  className={`h-[30px] border-r border-[#d0d0d0] px-[10px] pb-1 ${
                    activeTab === tab ? 'bg-white' : 'bg-[#eeeeee]'
                  }`}
                >
                  {tab}
                </button>
              ))}
            </nav>
          </div>
          <div className="pl-[9px]">
            <div className="mx-auto max-w-[920px] pl-[88px]">
              <Filters />
            </div>
          </div>
        </div>
        <div className="pt-[13px] pl-[9px]">
          <section className="mx-auto flex max-w-[920px] flex-col gap-[5px]">
            {disbursements.map((item) => (
              <DisbursementCard key={item.period} item={item} />
            ))}
          </section>
        </div>
      </main>

      <div className="flex w-[10px] shrink-0 flex-col items-center bg-white py-1 text-[#777]">
        <svg viewBox="0 0 6 5" className="h-[5px] w-[6px]" fill="currentColor"><path d="m3 0 3 5H0z" /></svg>
        <div className="mt-[92px] h-[406px] w-[6px] rounded-full bg-[#8b8b8b]" />
        <svg viewBox="0 0 6 5" className="mt-auto h-[5px] w-[6px]" fill="currentColor"><path d="M0 0h6L3 5z" /></svg>
      </div>

      <RecorderWidget />
      <button type="button" className="absolute bottom-0 left-[15px] flex h-[17px] w-[61px] items-center justify-center gap-1 rounded-t-[3px] bg-[#0d8286] font-['Open_Sans',sans-serif] text-[8px] font-semibold text-white">
        FEEDBACK
        <X className="size-2" strokeWidth={2.5} />
      </button>
      <button type="button" aria-label="Assistant" className="absolute right-[10px] bottom-[22px] flex h-[26px] w-[29px] items-center rounded-l-full bg-white pl-2 shadow-md">
        <BrainLogo className="size-[14px]" />
      </button>
      <SideHandle className="absolute top-[381px] right-0" shape="h-[38px] w-[17px]" />
    </div>
  )
}

export default function App() {
  return (
    <div className="flex h-screen flex-col overflow-hidden bg-black">
      <TitleBar />
      <div className="relative flex min-h-0 flex-1 pr-[57px] pl-14">
        <div className="relative flex min-w-0 flex-1 flex-col bg-white">
          <BrowserChrome />
          <PaymentsPage />
          <RemoteTaskbar />
          <div className="absolute top-0 right-[387px] flex h-[17px] w-[70px] items-center justify-between bg-[#efefef] px-px text-[#a5a5a5]">
            <svg viewBox="0 0 14 15" className="h-[15px] w-[14px]" fill="none" stroke="currentColor">
              <path d="M.500 0v15M4.500 0v15M8.500 0v15M12.500 0v15M0 2.500h14M0 6.500h14M0 10.500h14M0 14.500h14" />
            </svg>
            <svg viewBox="0 0 12 12" className="size-3" fill="none" stroke="currentColor" strokeWidth="1.500">
              <path d="m1 1 3.500 3.500M11 1 7.500 4.500M1 11l3.500-3.500M11 11 7.500 7.500M1 4V1h3M8 1h3v3M1 8v3h3M11 8v3H8" />
            </svg>
            <svg viewBox="0 0 14 14" className="size-[14px]" fill="none" stroke="currentColor">
              <path d="M.500 1.500h13v9H.500zM4 13h6" />
            </svg>
            <ChevronDown className="size-[14px] text-[#777]" strokeWidth={3} />
          </div>
        </div>
        <SideHandle className="absolute top-[377px] right-0" shape="h-[66px] w-[26px]" />
      </div>
      <HostTaskbar />
    </div>
  )
}
